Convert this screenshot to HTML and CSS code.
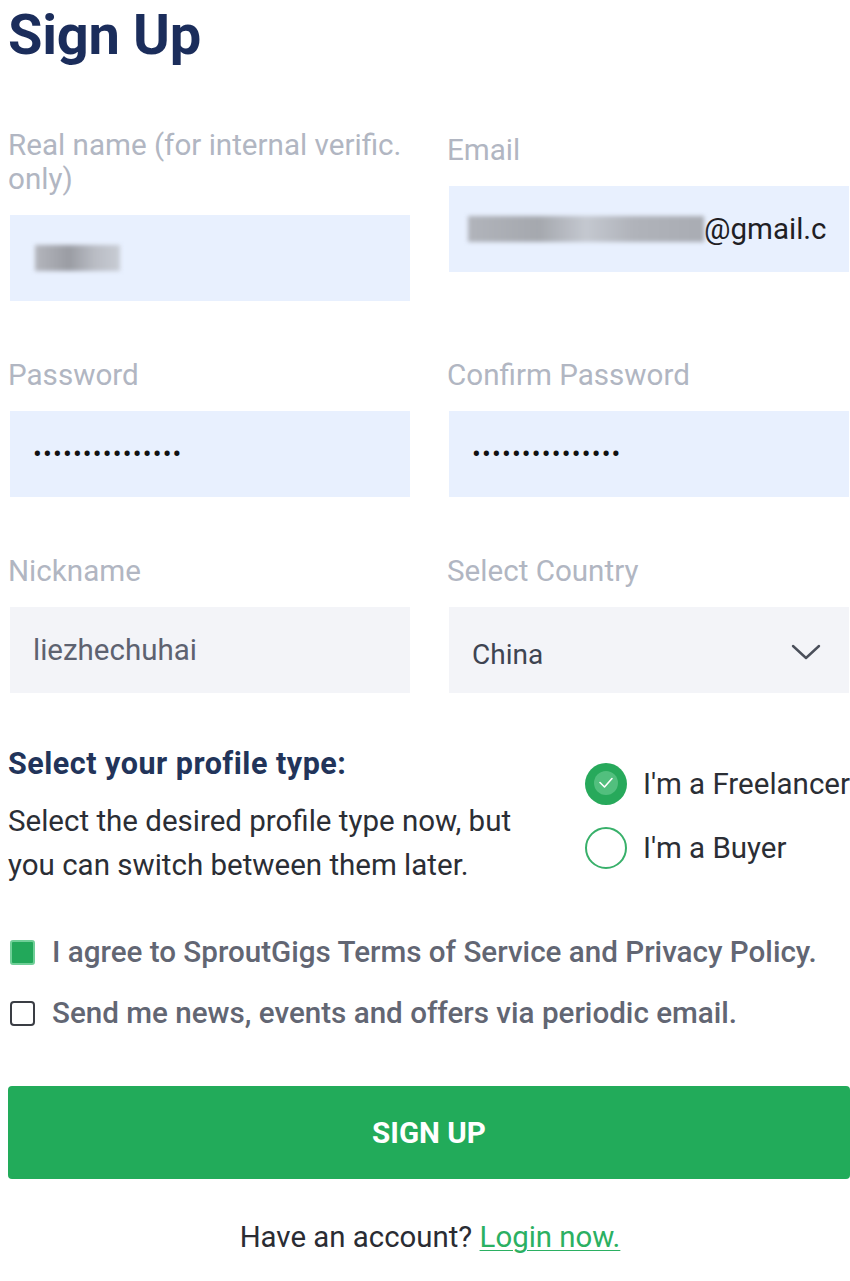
FILE: index.html
```html
<!DOCTYPE html>
<html lang="en">
<head>
<meta charset="utf-8">
<title>Sign Up</title>
<link rel="stylesheet" href="styles.css">
</head>
<body>
<main class="page">
  <h1 class="title">Sign Up</h1>

  <div class="fields">
    <div class="field">
      <label class="label">Real name (for internal verific. only)</label>
      <div class="input autofill">
        <span class="redact redact-name"></span>
      </div>
    </div>
    <div class="field field-shift">
      <label class="label">Email</label>
      <div class="input autofill">
        <span class="redact redact-email"></span><span class="value dark">@gmail.c</span>
      </div>
    </div>

    <div class="field">
      <label class="label">Password</label>
      <div class="input autofill"><span class="dots">•••••••••••••••</span></div>
    </div>
    <div class="field">
      <label class="label">Confirm Password</label>
      <div class="input autofill"><span class="dots">•••••••••••••••</span></div>
    </div>

    <div class="field">
      <label class="label">Nickname</label>
      <div class="input plain"><span class="value muted">liezhechuhai</span></div>
    </div>
    <div class="field">
      <label class="label">Select Country</label>
      <div class="input plain select">
        <span class="value country">China</span>
        <svg class="chevron" width="30" height="16" viewBox="0 0 30 16"><path d="M2 2 L15 14 L28 2" fill="none" stroke="#4a4f5a" stroke-width="2.4" stroke-linecap="round" stroke-linejoin="round"/></svg>
      </div>
    </div>
  </div>

  <section class="profile">
    <div class="profile-text">
      <h2 class="profile-title">Select your profile type:</h2>
      <p class="profile-desc">Select the desired profile type now, but you can switch between them later.</p>
    </div>
    <div class="radios">
      <div class="radio">
        <svg width="44" height="44" viewBox="0 0 44 44">
          <circle cx="22" cy="22" r="21" fill="#27a95b"/>
          <circle cx="22" cy="21" r="12" fill="#52bf7e"/>
          <path d="M16 20.5 L20.5 25 L28 16.5" fill="none" stroke="#ffffff" stroke-width="1.6" stroke-linecap="round" stroke-linejoin="round"/>
        </svg>
        <span>I'm a Freelancer</span>
      </div>
      <div class="radio">
        <svg width="44" height="44" viewBox="0 0 44 44">
          <circle cx="22" cy="22" r="20" fill="#ffffff" stroke="#38b06a" stroke-width="2"/>
        </svg>
        <span>I'm a Buyer</span>
      </div>
    </div>
  </section>

  <div class="checks">
    <div class="check">
      <span class="box checked"></span>
      <span>I agree to SproutGigs Terms of Service and Privacy Policy.</span>
    </div>
    <div class="check">
      <span class="box"></span>
      <span>Send me news, events and offers via periodic email.</span>
    </div>
  </div>

  <button class="submit" type="button">SIGN UP</button>

  <p class="footer">Have an account? <a href="#" class="link">Login now.</a></p>
</main>
</body>
</html>
```

FILE: styles.css
```css
* { box-sizing: border-box; }

html, body {
  margin: 0;
  padding: 0;
  background: #ffffff;
}

body {
  font-family: Roboto, "Liberation Sans", Arial, sans-serif;
  color: #2b2e35;
  width: 850px;
  overflow: hidden;
}

.page {
  padding: 0 0 0 8px;
  width: 850px;
}

.title {
  margin: 0;
  font-size: 56px;
  font-weight: 700;
  line-height: 70px;
  color: #1b2d5b;
  letter-spacing: -0.3px;
}

.fields {
  margin-top: 58px;
  display: grid;
  grid-template-columns: 402px 402px;
  column-gap: 37px;
  row-gap: 57px;
  align-items: start;
}

.field {
  display: flex;
  flex-direction: column;
  gap: 19px;
}

.field-shift { margin-top: 5px; }

.label {
  font-size: 29.6px;
  line-height: 34px;
  color: #b1b6c2;
  padding-right: 2px;
  white-space: normal;
}

.input {
  height: 86px;
  margin-left: 2px;
  display: flex;
  align-items: center;
  padding-left: 23px;
  position: relative;
  overflow: hidden;
}

.autofill { background: #e8f0fe; }
.plain { background: #f3f4f8; }

.value { font-size: 29.5px; }
.dark { color: #1f2024; }
.muted { color: #5d6270; }
.country { color: #3e4451; margin-top: 8px; font-size: 28px; }

.select { justify-content: space-between; padding-right: 28px; }
.chevron { margin-top: 4px; }

.dots {
  font-size: 26px;
  letter-spacing: 1.2px;
  color: #111;
}

.redact {
  display: inline-block;
  height: 26px;
  background: linear-gradient(90deg, #b4b6bd, #9a9ca3 40%, #b9bcc4 70%, #c8ccd4);
  filter: blur(2px);
}
.redact-name { width: 85px; margin-left: 2px; }
.redact-email { width: 236px; margin-left: -4px; background: linear-gradient(90deg, #b1b4bb, #a5a8ae 30%, #c4c8d0 50%, #b0b3ba 70%, #a9acb3); }

.profile {
  margin-top: 52px;
  display: flex;
}

.profile-text { width: 576px; }

.profile-title {
  margin: 0;
  font-size: 30.5px;
  line-height: 38px;
  font-weight: 700;
  letter-spacing: 0.5px;
  color: #22345a;
}

.profile-desc {
  margin: 16px 0 0;
  font-size: 29.5px;
  line-height: 44px;
  width: 530px;
  color: #2b2e35;
}

.radios {
  padding-top: 17px;
  display: flex;
  flex-direction: column;
  gap: 20px;
}

.radio {
  display: flex;
  align-items: center;
  gap: 15px;
  height: 44px;
  font-size: 29.5px;
  color: #2b2e35;
  white-space: nowrap;
}

.checks {
  margin-top: 47px;
  display: flex;
  flex-direction: column;
  gap: 25px;
}

.check {
  display: flex;
  align-items: center;
  gap: 17px;
  height: 36px;
  font-size: 29.6px;
  font-weight: 500;
  color: #626673;
  white-space: nowrap;
}

.box {
  width: 25px;
  height: 25px;
  margin-left: 2px;
  border: 2px solid #3a3d44;
  border-radius: 4px;
  background: #fff;
  flex-shrink: 0;
}

.box.checked {
  background: #22a85a;
  border-color: #6fcf97;
  border-radius: 3px;
}

.submit {
  display: block;
  margin-top: 55px;
  width: 842px;
  height: 93px;
  border: none;
  border-radius: 4px;
  background: #22ab5a;
  color: #ffffff;
  font-family: inherit;
  font-size: 29.6px;
  font-weight: 700;
}

.footer {
  margin: 40px 0 0;
  text-align: center;
  font-size: 29.4px;
  line-height: 36px;
  color: #2a2c33;
  padding-left: 2px;
}

.link {
  color: #2bb062;
  text-decoration: underline;
  text-underline-offset: 3px;
  text-decoration-thickness: 1px;
}
```
